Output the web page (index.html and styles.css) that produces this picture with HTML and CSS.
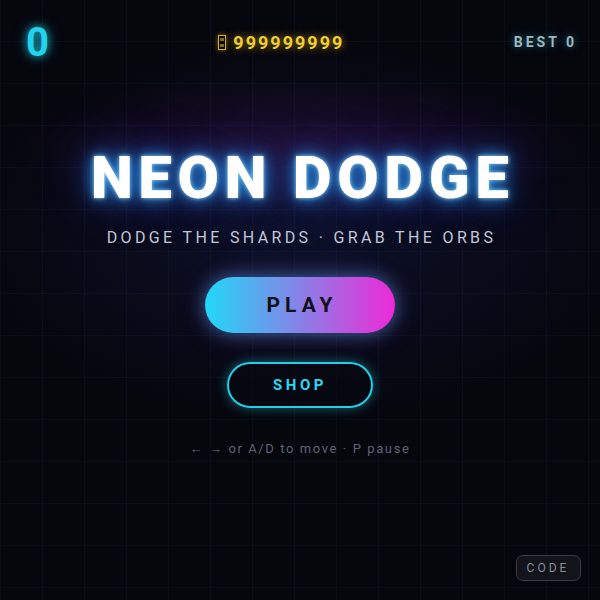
FILE: index.html
```html
<!DOCTYPE html>
<html>
<head>
<meta charset="utf-8">
<link rel="stylesheet" href="styles.css">
</head>
<body>
<div class="screen">
  <div class="glow"></div>
  <header class="hud">
    <div class="score">0</div>
    <div class="coins"><span class="tofu"><span class="tofu-x"></span></span><span class="coin-num">999999999</span></div>
    <div class="best">BEST 0</div>
  </header>
  <main class="menu">
    <h1 class="title">NEON DODGE</h1>
    <p class="tagline">DODGE THE SHARDS · GRAB THE ORBS</p>
    <button class="btn-play">PLAY</button>
    <button class="btn-shop">SHOP</button>
    <p class="hint">← → or A/D to move · P pause</p>
  </main>
  <footer class="foot">
    <button class="btn-code">CODE</button>
  </footer>
</div>
</body>
</html>
```
FILE: styles.css
```css
html, body {
  margin: 0;
  padding: 0;
  background: #06060d;
}
.screen {
  position: relative;
  width: 600px;
  height: 600px;
  overflow: hidden;
  font-family: Roboto, "Liberation Sans", sans-serif;
  background-color: #06060d;
  background-image:
    linear-gradient(to right, rgba(40, 70, 110, 0.12) 1px, transparent 1px),
    linear-gradient(to bottom, rgba(40, 70, 110, 0.12) 1px, transparent 1px);
  background-size: 42px 42px;
  background-position: 0 -1px;
  display: flex;
  flex-direction: column;
}
.glow {
  position: absolute;
  left: 0; top: 0; right: 0; bottom: 0;
  background:
    radial-gradient(ellipse 290px 70px at 300px 145px, rgba(150, 40, 170, 0.15), transparent 100%),
    radial-gradient(ellipse 340px 190px at 300px 230px, rgba(40, 60, 150, 0.22), transparent 100%);
  pointer-events: none;
}
.hud {
  position: relative;
  display: flex;
  justify-content: space-between;
  align-items: center;
  padding: 22px 26px 0 26px;
  height: 40px;
}
.score {
  font-size: 40px;
  font-weight: 700;
  color: #22d3ee;
  text-shadow: 0 0 8px rgba(34, 211, 238, 0.8), 0 0 16px rgba(34, 211, 238, 0.4);
}
.coins {
  display: flex;
  align-items: center;
  gap: 7px;
  font-size: 18px;
  font-weight: 700;
  letter-spacing: 2px;
  color: #f2cf2e;
  text-shadow: 0 0 8px rgba(250, 204, 21, 0.6);
}
.tofu {
  display: inline-block;
  width: 6px;
  height: 13px;
  border: 1px solid #d9b21a;
  position: relative;
  box-shadow: 0 0 5px rgba(250, 204, 21, 0.5);
}
.tofu-x {
  position: absolute;
  left: 1px; top: 2px; right: 1px; bottom: 2px;
  background: linear-gradient(to bottom, #b8961a 0 30%, transparent 30% 70%, #b8961a 70%);
  opacity: 0.7;
}
.best {
  font-size: 14px;
  font-weight: 700;
  letter-spacing: 3px;
  margin-right: -3px;
  color: #9fb7bf;
  text-shadow: 0 0 8px rgba(34, 211, 238, 0.5);
}
.menu {
  position: relative;
  display: flex;
  flex-direction: column;
  align-items: center;
}
.title {
  margin: 78px 0 0 0;
  font-size: 60px;
  font-weight: 900;
  line-height: 76px;
  letter-spacing: 5.6px;
  padding-left: 5px;
  color: #ffffff;
  text-shadow:
    0 0 4px rgba(180, 235, 255, 0.8),
    0 0 14px rgba(34, 150, 230, 0.95),
    0 0 26px rgba(30, 110, 210, 0.85),
    0 0 50px rgba(90, 60, 210, 0.55);
}
.tagline {
  margin: 12px 0 0 0;
  font-size: 16px;
  font-weight: 400;
  letter-spacing: 3.35px;
  padding-left: 3px;
  color: #c3c6d6;
}
.btn-play {
  margin-top: 30px;
  width: 190px;
  height: 56px;
  border: none;
  border-radius: 28px;
  background: linear-gradient(to right, #22d8f8, #ee2ad6);
  font-family: Roboto, "Liberation Sans", sans-serif;
  font-size: 21px;
  font-weight: 700;
  letter-spacing: 5px;
  padding-left: 10px;
  color: #10101a;
  box-shadow: 0 0 18px rgba(60, 170, 240, 0.55), 0 0 30px rgba(180, 60, 220, 0.25);
}
.btn-shop {
  margin-top: 29px;
  width: 146px;
  height: 46px;
  border: 2px solid #22cfe8;
  border-radius: 23px;
  background: rgba(6, 8, 16, 0.6);
  font-family: Roboto, "Liberation Sans", sans-serif;
  font-size: 15px;
  font-weight: 700;
  letter-spacing: 3.5px;
  padding-left: 6px;
  color: #2fd6f0;
  box-shadow: 0 0 12px rgba(34, 211, 238, 0.45);
}
.hint {
  margin: 33px 0 0 0;
  font-size: 13px;
  letter-spacing: 1.6px;
  color: #5e6375;
}
.foot {
  position: relative;
  margin-top: auto;
  display: flex;
  justify-content: flex-end;
  padding: 0 19px 19px 0;
}
.btn-code {
  width: 65px;
  height: 26px;
  border: 1px solid #3b3d48;
  border-radius: 7px;
  background: #13141b;
  font-family: Roboto, "Liberation Sans", sans-serif;
  font-size: 12px;
  letter-spacing: 3px;
  padding-left: 5px;
  color: #8a8c98;
}
```
